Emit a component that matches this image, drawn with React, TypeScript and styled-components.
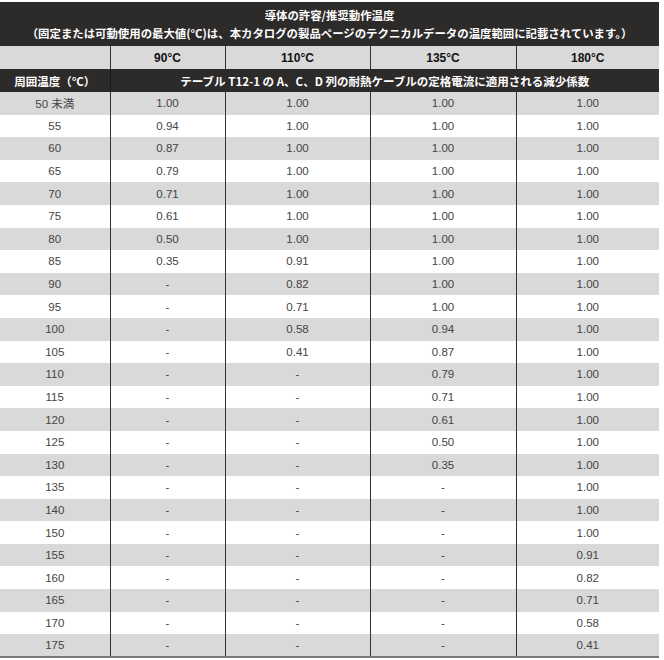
import { createGlobalStyle } from "styled-components";
import styled from "styled-components";

const GlobalStyle = createGlobalStyle`
  html, body {
    margin: 0;
    padding: 0;
    background: #fff;
  }
  body {
    font-family: "Liberation Sans", "Noto Sans CJK JP", sans-serif;
  }
`;

type Row = [string, string, string, string, string];

const rows: Row[] = [
  ["50 未満", "1.00", "1.00", "1.00", "1.00"],
  ["55", "0.94", "1.00", "1.00", "1.00"],
  ["60", "0.87", "1.00", "1.00", "1.00"],
  ["65", "0.79", "1.00", "1.00", "1.00"],
  ["70", "0.71", "1.00", "1.00", "1.00"],
  ["75", "0.61", "1.00", "1.00", "1.00"],
  ["80", "0.50", "1.00", "1.00", "1.00"],
  ["85", "0.35", "0.91", "1.00", "1.00"],
  ["90", "-", "0.82", "1.00", "1.00"],
  ["95", "-", "0.71", "1.00", "1.00"],
  ["100", "-", "0.58", "0.94", "1.00"],
  ["105", "-", "0.41", "0.87", "1.00"],
  ["110", "-", "-", "0.79", "1.00"],
  ["115", "-", "-", "0.71", "1.00"],
  ["120", "-", "-", "0.61", "1.00"],
  ["125", "-", "-", "0.50", "1.00"],
  ["130", "-", "-", "0.35", "1.00"],
  ["135", "-", "-", "-", "1.00"],
  ["140", "-", "-", "-", "1.00"],
  ["150", "-", "-", "-", "1.00"],
  ["155", "-", "-", "-", "0.91"],
  ["160", "-", "-", "-", "0.82"],
  ["165", "-", "-", "-", "0.71"],
  ["170", "-", "-", "-", "0.58"],
  ["175", "-", "-", "-", "0.41"],
];

const temps = ["90°C", "110°C", "135°C", "180°C"];
const widths = [110, 115, 145, 146, 143];

const Page = styled.div`
  padding-top: 2px;
`;

const Table = styled.table`
  width: 659px;
  border-collapse: collapse;
  table-layout: fixed;
  border-bottom: 2px solid #7a7a7a;
`;

const TitleCell = styled.th`
  height: 44px;
  padding: 0;
  background: #2d2a2a;
  color: #fff;
  font-family: "Noto Sans CJK JP", sans-serif;
  font-size: 11.4px;
  font-weight: 700;
  line-height: 18px;
  text-align: center;
`;

const HeadCell = styled.th<{ $first?: boolean }>`
  height: 23px;
  padding: 0;
  background: #d9d9d9;
  color: #111;
  font-size: 12px;
  font-weight: 700;
  text-align: center;
  border-left: ${(p) => (p.$first ? "none" : "1px solid #333")};
`;

const BandCell = styled.th<{ $first?: boolean }>`
  height: 23px;
  padding: 0;
  background: #2d2a2a;
  color: #fff;
  font-family: "Noto Sans CJK JP", sans-serif;
  font-size: 11.5px;
  font-weight: 700;
  text-align: center;
  border-left: ${(p) => (p.$first ? "none" : "1px solid #1a1a1a")};
`;

const DataRow = styled.tr<{ $shade: boolean }>`
  height: 22.6px;
  background: ${(p) => (p.$shade ? "#d9d9d9" : "#fff")};
`;

const Cell = styled.td<{ $first?: boolean }>`
  padding: 0;
  color: #444;
  font-size: 11.5px;
  text-align: center;
  border-left: ${(p) => (p.$first ? "none" : "1px solid #333")};
`;

export default function App() {
  return (
    <Page>
      <GlobalStyle />
      <Table>
        <colgroup>
          {widths.map((w, i) => (
            <col key={i} style={{ width: w }} />
          ))}
        </colgroup>
        <thead>
          <tr>
            <TitleCell colSpan={5}>
              導体の許容/推奨動作温度
              <br />
              （固定または可動使用の最大値(°C)は、本カタログの製品ページのテクニカルデータの温度範囲に記載されています。）
            </TitleCell>
          </tr>
          <tr>
            <HeadCell $first />
            {temps.map((t) => (
              <HeadCell key={t}>{t}</HeadCell>
            ))}
          </tr>
          <tr>
            <BandCell $first>周囲温度（°C）</BandCell>
            <BandCell colSpan={4}>
              テーブル T12-1 の A、C、D 列の耐熱ケーブルの定格電流に適用される減少係数
            </BandCell>
          </tr>
        </thead>
        <tbody>
          {rows.map((r, i) => (
            <DataRow key={r[0]} $shade={i % 2 === 0}>
              {r.map((v, j) => (
                <Cell key={j} $first={j === 0}>
                  {v}
                </Cell>
              ))}
            </DataRow>
          ))}
        </tbody>
      </Table>
    </Page>
  );
}
